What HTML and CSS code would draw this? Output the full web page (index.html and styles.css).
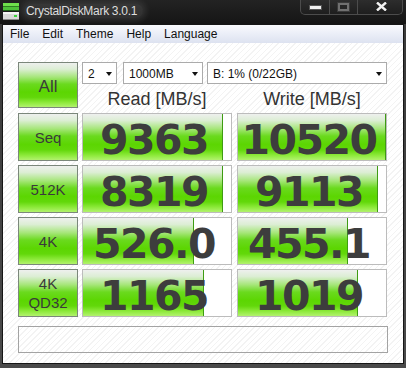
FILE: index.html
```html
<!DOCTYPE html>
<html lang="en">
<head>
  <meta charset="UTF-8">
  <title>CrystalDiskMark 3.0.1</title>
  <link rel="stylesheet" href="styles.css">
</head>
<body>
  <div class="window">
    <div class="titlebar">
      <svg class="app-icon" width="17" height="18" viewBox="0 0 17 18">
        <rect x="0" y="0" width="16" height="3" fill="#6fe04c"/>
        <rect x="0" y="3" width="16" height="1" fill="#2f7f22"/>
        <rect x="0" y="4" width="16" height="3" fill="#4fc23a"/>
        <rect x="0" y="7" width="16" height="1" fill="#1f5f18"/>
        <rect x="0" y="9" width="16" height="8" fill="#d9d9d9"/>
        <rect x="0" y="9" width="16" height="2" fill="#f4f4f4"/>
        <rect x="0" y="16" width="16" height="1" fill="#8a8a8a"/>
        <rect x="11" y="12" width="3" height="2" fill="#3cd43c"/>
      </svg>
      <span class="title">CrystalDiskMark 3.0.1</span>
      <div class="caption">
        <span class="cap-btn min"><i></i></span>
        <span class="cap-btn max"><i></i></span>
        <span class="cap-btn close">
          <svg width="11" height="9" viewBox="0 0 11 9">
            <path d="M1 0.5 L10 8.5 M10 0.5 L1 8.5" stroke="#f2f2f2" stroke-width="2.4"/>
          </svg>
        </span>
      </div>
    </div>

    <div class="client">
      <ul class="menu">
        <li>File</li>
        <li>Edit</li>
        <li>Theme</li>
        <li>Help</li>
        <li>Language</li>
      </ul>

      <div class="panel">
        <div class="grid">
          <div class="btn all">All</div>
          <div class="top">
            <div class="selects">
              <div class="sel sel-count"><span>2</span><b></b></div>
              <div class="sel sel-size"><span>1000MB</span><b></b></div>
              <div class="sel sel-drive"><span>B: 1% (0/22GB)</span><b></b></div>
            </div>
            <div class="heads">
              <span>Read [MB/s]</span>
              <span>Write [MB/s]</span>
            </div>
          </div>

          <div class="btn">Seq</div>
          <div class="val"><div class="fill" style="width:140px"></div><span class="num">9363</span></div>
          <div class="val write"><div class="fill" style="width:148px"></div><span class="num">10520</span></div>

          <div class="btn">512K</div>
          <div class="val"><div class="fill" style="width:140px"></div><span class="num">8319</span></div>
          <div class="val write"><div class="fill" style="width:140px"></div><span class="num">9113</span></div>

          <div class="btn">4K</div>
          <div class="val"><div class="fill" style="width:111px"></div><span class="num">526.0</span></div>
          <div class="val write"><div class="fill" style="width:110px"></div><span class="num">455.1</span></div>

          <div class="btn">4K<br>QD32</div>
          <div class="val"><div class="fill" style="width:121px"></div><span class="num">1165</span></div>
          <div class="val write"><div class="fill" style="width:120px"></div><span class="num">1019</span></div>
        </div>

        <div class="status"></div>
      </div>
    </div>
  </div>
</body>
</html>
```

FILE: styles.css
```css
:root {
  --text: #3d3d3d;
  --box-border: #bcbcbc;
  --green: linear-gradient(#eef0ee 0%, #dceed4 14%, #a6e67a 32%, #6ada1e 48%, #5cd602 66%, #62d80a 78%, #8eea3c 90%, #b2f26e 100%);
}

body {
  margin: 0;
  font-family: "Liberation Sans", Arial, sans-serif;
  background: #fff;
}

.window {
  width: 406px;
  height: 368px;
  box-sizing: border-box;
  padding: 0 2px 4px 2px;
  display: flex;
  flex-direction: column;
  background: linear-gradient(#1c1c1c, #222 24px, #3a3a3a 24px, #4a4a4a);
}

/* title bar */

.titlebar {
  height: 24px;
  flex: none;
  display: flex;
  align-items: flex-start;
  position: relative;
  background: linear-gradient(#232323, #151515);
  margin: 0 -2px;
  padding: 0 2px;
}

.app-icon {
  margin: 3px 0 0 1px;
}

.title {
  margin: 4px 0 0 4px;
  padding: 0 6px 0 2px;
  font-size: 12px;
  letter-spacing: -0.3px;
  color: #dedede;
  border-radius: 9px;
  background: rgba(255, 255, 255, 0.1);
  box-shadow: 0 0 6px 3px rgba(255, 255, 255, 0.1);
}

.caption {
  position: absolute;
  top: -1px;
  left: 300px;
  width: 103px;
  height: 16px;
  display: flex;
  box-sizing: border-box;
  border: 1px solid #4c4c4c;
  border-top: none;
  border-radius: 0 0 5px 5px;
  background: linear-gradient(#2e2e2e, #1e1e1e);
}

.cap-btn {
  display: flex;
  align-items: center;
  justify-content: center;
  height: 100%;
  box-sizing: border-box;
}

.cap-btn.min {
  width: 29px;
  border-right: 1px solid #4c4c4c;
}

.cap-btn.min i {
  width: 11px;
  height: 3px;
  margin-top: 1px;
  background: #f0f0f0;
  box-shadow: 0 0 0 1px #555;
}

.cap-btn.max {
  width: 28px;
  border-right: 1px solid #4c4c4c;
}

.cap-btn.max i {
  width: 7px;
  height: 4px;
  border: 2px solid #707070;
  outline: 1px solid #3a3a3a;
  background: #262626;
}

.cap-btn.close {
  flex: 1;
  padding-left: 2px;
}

/* client area */

.client {
  flex: 1;
  border: 1px solid #161616;
  background-color: #fff;
  background-image: repeating-linear-gradient(135deg, #fff 0 3px, #f3f3f3 3px 4px);
  display: flex;
  flex-direction: column;
}

.menu {
  list-style: none;
  margin: 0;
  padding: 0 0 0 7px;
  height: 18px;
  display: flex;
  align-items: center;
  gap: 13px;
  font-size: 12px;
  color: #111;
  background: linear-gradient(#f9fafd, #eceff8 45%, #dde2f0);
}

.panel {
  padding: 19px 0 0 15px;
}

.grid {
  display: grid;
  grid-template-columns: 60px 150px 151px;
  grid-template-rows: 47px repeat(4, 48px);
  column-gap: 4px;
  row-gap: 4px;
}

.btn {
  box-sizing: border-box;
  height: 48px;
  border: 1px solid #7b877b;
  background: var(--green);
  display: flex;
  align-items: center;
  justify-content: center;
  text-align: center;
  font-size: 15px;
  line-height: 19px;
  color: #3a3a3a;
}

.btn.all {
  height: 46px;
  font-size: 17px;
  padding-top: 3px;
}

.top {
  grid-column: 2 / 4;
}

.selects {
  display: flex;
  height: 22px;
}

.sel {
  box-sizing: border-box;
  height: 22px;
  border: 1px solid #ababab;
  background: #fff;
  display: flex;
  align-items: center;
  justify-content: space-between;
  padding: 1px 4px 0 5px;
  font-size: 12px;
  color: #111;
}

.sel b {
  width: 0;
  height: 0;
  border-left: 3.5px solid transparent;
  border-right: 3.5px solid transparent;
  border-top: 4px solid #111;
}

.sel-count {
  width: 35px;
}

.sel-size {
  width: 80px;
  margin-left: 6px;
}

.sel-drive {
  width: 180px;
  margin-left: 4px;
}

.heads {
  display: grid;
  grid-template-columns: 150px 150px;
  column-gap: 5px;
  margin-top: 3px;
  font-size: 18px;
  line-height: 24px;
  color: #333;
  text-align: center;
}

.val {
  position: relative;
  box-sizing: border-box;
  width: 150px;
  height: 48px;
  border: 1px solid var(--box-border);
  background: #fff;
}

.val.write {
  margin-left: 1px;
}

.fill {
  position: absolute;
  left: 0;
  top: 0;
  bottom: 0;
  box-sizing: border-box;
  background: var(--green);
  border-right: 1px solid #3e9c12;
}

.num {
  position: relative;
  display: block;
  padding: 0 6px 0 0;
  text-align: center;
  font-family: "DejaVu Sans", sans-serif;
  font-weight: bold;
  font-size: 41px;
  line-height: 46px;
  letter-spacing: -1.5px;
  color: var(--text);
  transform: translateY(3px);
}

.status {
  margin-top: 9px;
  width: 370px;
  height: 27px;
  box-sizing: border-box;
  border: 1px solid #a3a3a3;
}
```
